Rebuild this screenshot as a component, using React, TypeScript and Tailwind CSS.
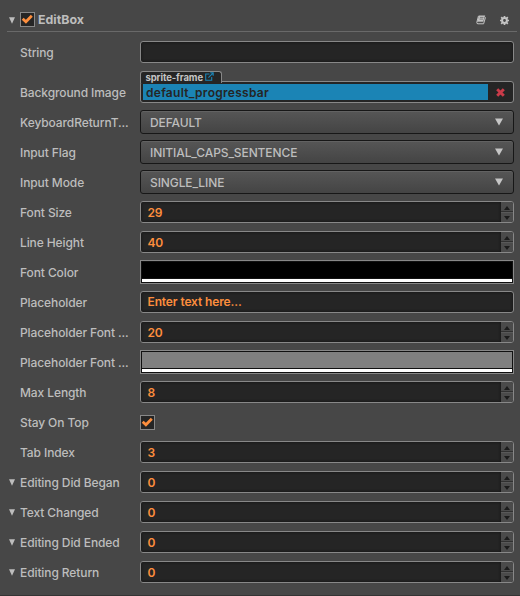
import type { ReactNode } from "react";

function Caret() {
  return (
    <svg className="mt-px h-[7px] w-[6px] shrink-0" viewBox="0 0 6 7" aria-hidden="true">
      <path d="M0 0.2h6L3 6.8z" fill="#bdbdbd" />
    </svg>
  );
}

function Check() {
  return (
    <span className="flex h-[15px] w-[15px] shrink-0 items-center justify-center border border-[#888] bg-[#252525]">
      <svg className="h-[13px] w-[13px]" viewBox="0 0 13 13" aria-hidden="true">
        <path d="M1.7 5.8L4.9 8.8L10.8 2.8" fill="none" stroke="#fd8e3d" strokeWidth="2.8" />
      </svg>
    </span>
  );
}

function Row({ label, fold, tall, children }: { label: string; fold?: boolean; tall?: boolean; children: ReactNode }) {
  return (
    <div className={tall ? "flex h-10 pr-[6px] pl-[9px]" : "flex h-[30px] items-center pr-[6px] pl-[9px]"}>
      <div className={tall ? "flex w-[131px] shrink-0 items-center pt-[12px]" : "flex w-[131px] shrink-0 items-center pt-[2px]"}>
        <span className="-mt-[2px] flex w-[11px] shrink-0">{fold && <Caret />}</span>
        <span className="whitespace-nowrap text-[12px] leading-4 font-medium tracking-[-0.1px] text-[#bdbdbd]">{label}</span>
      </div>
      <div className="min-w-0 flex-1">{children}</div>
    </div>
  );
}

function Field({ value }: { value?: string }) {
  return (
    <div className="flex h-[22px] items-center rounded-[3px] border border-[#888] bg-[#252525] pl-[6.5px] text-[12px] font-semibold tracking-[-0.12px] text-[#fd8e3d] shadow-[inset_0_0_3px_#111]">
      {value}
    </div>
  );
}

function NumberField({ value }: { value: string }) {
  return (
    <div className="flex h-[22px] overflow-hidden rounded-[3px] border border-[#888] bg-[#252525]">
      <div className="flex flex-1 items-center pt-[2px] pl-[6.5px] text-[12px] font-semibold tracking-[-0.2px] text-[#fd8e3d] shadow-[inset_0_0_3px_#111]">
        {value}
      </div>
      <div className="flex w-3 flex-col bg-[#4b4b4b]">
        <span className="flex h-[10px] items-center justify-center border-b border-[#303030]">
          <svg className="mt-[2px] h-[4px] w-[6px]" viewBox="0 0 6 4"><path d="M3 0L6 4H0z" fill="#1c1c1c" /></svg>
        </span>
        <span className="flex h-[10px] items-center justify-center border-t border-[#595959]">
          <svg className="h-[4px] w-[6px]" viewBox="0 0 6 4"><path d="M0 0h6L3 4z" fill="#1c1c1c" /></svg>
        </span>
      </div>
    </div>
  );
}

function Select({ value }: { value: string }) {
  return (
    <div className="flex h-6 items-center justify-between rounded-[3px] border border-[#171717] bg-linear-to-b from-[#565656] to-[#444] pr-[10px] pl-[9px] shadow-[inset_0_1px_0_#626262]">
      <span className="pt-[2px] text-[12px] font-medium tracking-[-0.1px] text-[#bdbdbd]">{value}</span>
      <svg className="h-[8px] w-[8px]" viewBox="0 0 8 8"><path d="M0 0.5h8L4 7.5z" fill="#c6c6c6" /></svg>
    </div>
  );
}

function ColorField({ fill }: { fill: string }) {
  return (
    <div className="h-6 border border-[#888] bg-[#111] p-px">
      <div className={`h-[16px] ${fill}`} />
      <div className="mt-px h-[3px] bg-white" />
    </div>
  );
}

function AssetField() {
  return (
    <div className="relative pt-[14px]">
      <div className="flex h-[22px] rounded-[3px] border border-[#888] bg-[#252525] p-[2px]">
        <div className="flex flex-1 items-center bg-[#1b84b5] pt-px pl-[3px] text-[12px] font-semibold tracking-[0.28px] text-[#252525]">
          default_progressbar
        </div>
        <div className="flex w-[23px] items-center justify-center pl-px">
          <svg className="h-[9px] w-[9px]" viewBox="0 0 9 9"><path d="M1.2 1.2l6.6 6.6M7.8 1.2L1.2 7.8" stroke="#ca3b49" strokeWidth="2.9" /></svg>
        </div>
      </div>
      <div className="absolute top-1 left-0 flex h-[12px] w-[82px] rounded-t-[3px] border border-b-0 border-[#888] bg-[#252525] pl-[4.5px]">
        <span className="w-[59px] text-[9.5px] leading-[11px] font-bold tracking-[-0.1px] whitespace-nowrap text-[#c4c4c4]">sprite-frame</span>
        <svg className="h-[9px] w-[9px] shrink-0" viewBox="0 0 9 9" fill="none" stroke="#1b84b5">
          <path d="M4.5 2H.7v6.3h6V5M3.4 5.6L8 1M5.2.7h3v3" strokeWidth="1.1" />
        </svg>
      </div>
    </div>
  );
}

export default function App() {
  return (
    <main className="h-[596px] w-[520px] overflow-hidden border-b border-[#343434] bg-[#474747] font-['Inter','Liberation_Sans',sans-serif]">
      <header className="mr-[3px] ml-[7px] flex h-8 items-center border-b border-[#696969] pt-[8px] pr-[8px] pl-[2px]">
        <span className="flex w-[11px]"><Caret /></span>
        <Check />
        <h1 className="ml-[3px] flex-1 pt-px text-[12.4px] font-bold text-[#bdbdbd]">EditBox</h1>
        <svg className="mt-px mr-[14px] h-[10px] w-[10px]" viewBox="0 0 10 10">
          <path d="M3 .5h6.2L7.5 7H1.2z" fill="#c4c4c4" />
          <path d="M3.9 2.4h3.6M3.5 4.1h3.6M1.5 7h6L9.2 1.5" fill="none" stroke="#5a5a5a" strokeWidth=".7" />
          <path d="M2.5.8L.8 7.4Q.6 8.8 2 8.8h5.6L9.5 2.3" fill="none" stroke="#c4c4c4" strokeWidth="1" />
        </svg>
        <svg className="mt-px h-[9px] w-[9px]" viewBox="0 0 9 9">
          <circle cx="4.5" cy="4.5" r="2.4" fill="none" stroke="#c4c4c4" strokeWidth="2" />
          <path d="M4.5 0v1.8M4.5 7.2V9M0 4.5h1.8M7.2 4.5H9M1.2 1.2l1.3 1.3M6.5 6.5l1.3 1.3M7.8 1.2L6.5 2.5M2.5 6.5L1.2 7.8" stroke="#c4c4c4" strokeWidth="1.7" />
        </svg>
      </header>
      <section className="pt-[5px]">
        <Row label="String"><Field /></Row>
        <Row label="Background Image" tall><AssetField /></Row>
        <Row label="KeyboardReturnT..."><Select value="DEFAULT" /></Row>
        <Row label="Input Flag"><Select value="INITIAL_CAPS_SENTENCE" /></Row>
        <Row label="Input Mode"><Select value="SINGLE_LINE" /></Row>
        <Row label="Font Size"><NumberField value="29" /></Row>
        <Row label="Line Height"><NumberField value="40" /></Row>
        <Row label="Font Color"><ColorField fill="bg-black" /></Row>
        <Row label="Placeholder"><Field value="Enter text here..." /></Row>
        <Row label="Placeholder Font ..."><NumberField value="20" /></Row>
        <Row label="Placeholder Font ..."><ColorField fill="bg-[#808080]" /></Row>
        <Row label="Max Length"><NumberField value="8" /></Row>
        <Row label="Stay On Top"><Check /></Row>
        <Row label="Tab Index"><NumberField value="3" /></Row>
        <Row label="Editing Did Began" fold><NumberField value="0" /></Row>
        <Row label="Text Changed" fold><NumberField value="0" /></Row>
        <Row label="Editing Did Ended" fold><NumberField value="0" /></Row>
        <Row label="Editing Return" fold><NumberField value="0" /></Row>
      </section>
    </main>
  );
}
